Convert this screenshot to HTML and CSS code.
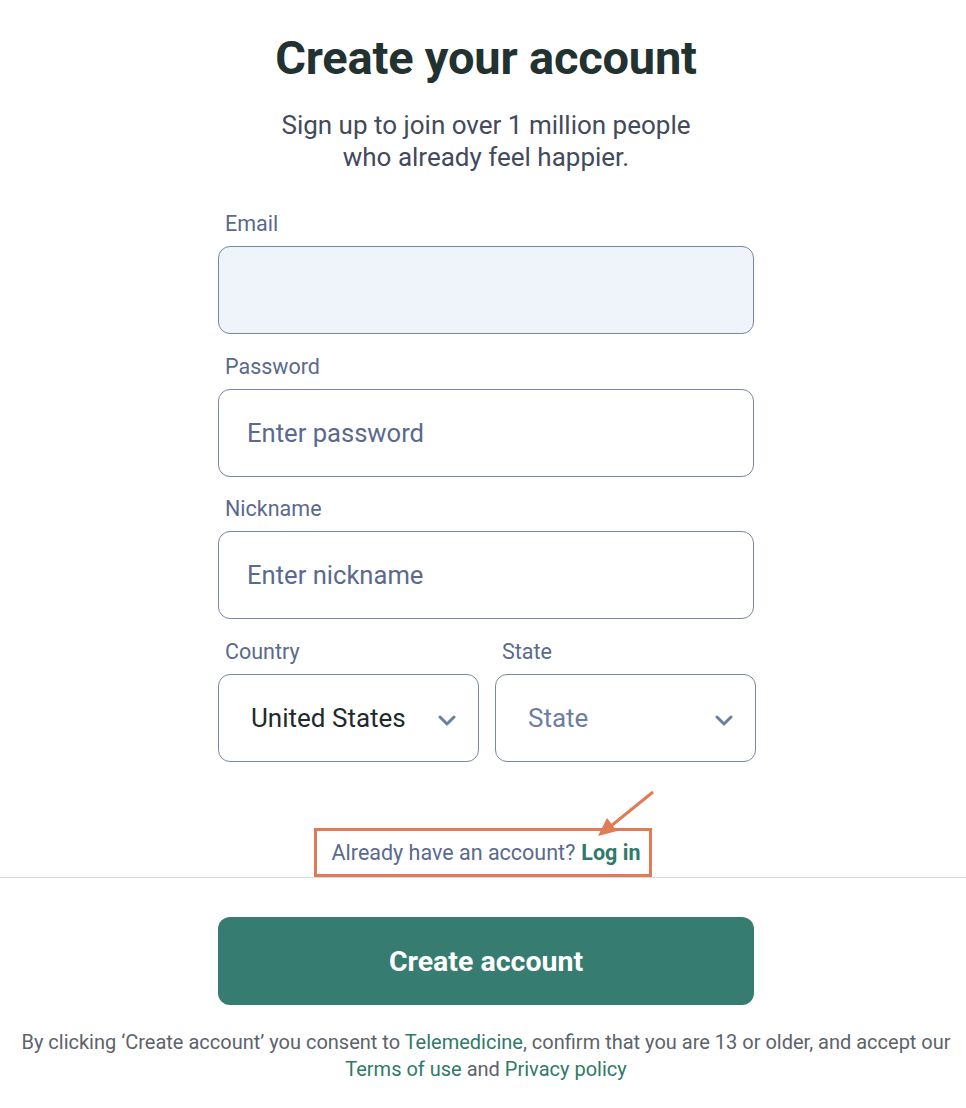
FILE: index.html
```html
<!DOCTYPE html>
<html lang="en">
<head>
<meta charset="utf-8">
<title>Create your account</title>
<link rel="stylesheet" href="styles.css">
</head>
<body>
<main class="page">
  <section class="form-area">
    <h1 class="title">Create your account</h1>
    <p class="subtitle">Sign up to join over 1 million people<br>who already feel happier.</p>

    <div class="field field-first">
      <label class="label">Email</label>
      <div class="input input-filled"></div>
    </div>
    <div class="field">
      <label class="label">Password</label>
      <div class="input"><span class="placeholder">Enter password</span></div>
    </div>
    <div class="field">
      <label class="label">Nickname</label>
      <div class="input"><span class="placeholder">Enter nickname</span></div>
    </div>
    <div class="row">
      <div class="field field-half">
        <label class="label">Country</label>
        <div class="input select"><span class="value">United States</span>
          <svg class="chev" width="18" height="11" viewBox="0 0 18 11"><path d="M2 2l7 7 7-7" fill="none" stroke="#6b7ea3" stroke-width="3" stroke-linecap="round" stroke-linejoin="round"/></svg>
        </div>
      </div>
      <div class="field field-half">
        <label class="label">State</label>
        <div class="input select"><span class="value value-muted">State</span>
          <svg class="chev" width="18" height="11" viewBox="0 0 18 11"><path d="M2 2l7 7 7-7" fill="none" stroke="#6b7ea3" stroke-width="3" stroke-linecap="round" stroke-linejoin="round"/></svg>
        </div>
      </div>
    </div>

    <div class="login-wrap">
      <p class="login">Already have an account? <a class="login-link">Log in</a></p>
      <svg class="arrow" width="70" height="60" viewBox="0 0 70 60">
        <line x1="67" y1="4" x2="25" y2="38" stroke="#e07b55" stroke-width="3"/>
        <path d="M12 48 L21 30 L31 43 Z" fill="#e07b55"/>
      </svg>
    </div>
  </section>
  <hr class="divider">
  <section class="bottom">
    <button class="cta">Create account</button>
    <p class="legal">By clicking ‘Create account’ you consent to <a class="green">Telemedicine</a>, confirm that you are 13 or older, and accept our<br><a class="green">Terms of use</a> and <a class="green">Privacy policy</a></p>
  </section>
</main>
</body>
</html>
```

FILE: styles.css
```css
* { box-sizing: border-box; }
html, body { background: #fff; }
body {
  margin: 0;
  padding-left: 6px;
  font-family: Roboto, "Liberation Sans", sans-serif;
}
.page { width: 960px; }
.form-area {
  width: 536px;
  margin: 0 auto;
  display: flex;
  flex-direction: column;
}
.title {
  margin: 30px 0 0;
  font-size: 47px;
  line-height: 56px;
  font-weight: 700;
  color: #223230;
  text-align: center;
  letter-spacing: -0.2px;
}
.subtitle {
  margin: 23px 0 0;
  font-size: 26px;
  line-height: 32px;
  color: #434a5c;
  text-align: center;
}
.field { display: flex; flex-direction: column; margin-top: 22.5px; }
.field-first { margin-top: 41px; }
.label {
  font-size: 21.5px;
  line-height: 20px;
  color: #5a6a8e;
  padding-left: 7px;
  margin-bottom: 12px;
}
.input {
  height: 88px;
  border: 1px solid #7887a8;
  border-radius: 12px;
  background: #fff;
  display: flex;
  align-items: center;
  padding: 0 28px;
}
.input-filled { background: #eff3fa; }
.placeholder { font-size: 25.6px; color: #5a6a8e; }
.row { display: flex; gap: 16px; }
.field-half { flex: 1; }
.field-half:last-child { margin-right: -2px; }
.select { justify-content: space-between; padding: 0 22px 0 32px; }
.value { font-size: 26px; color: #1f2a2b; }
.value-muted { color: #6b7ea3; }
.chev { display: block; margin-top: 6px; }
.login-wrap {
  position: relative;
  align-self: center;
  margin-top: 66.5px;
  margin-left: -6px;
}
.login {
  margin: 0;
  border: 3px solid #e07b55;
  padding: 0 9px 0 15px;
  height: 49px;
  display: flex;
  align-items: center;
  font-size: 21.5px;
  color: #5a6a8e;
}
.login-link { color: #2f7a68; font-weight: 700; margin-left: 6px; }
.arrow { position: absolute; right: -4px; top: -40px; }
.divider {
  margin: 0 0 0 -6px;
  width: 966px;
  border: 0;
  border-top: 1px solid #d8d6de;
}
.bottom { display: flex; flex-direction: column; align-items: center; }
.cta {
  margin-top: 39px;
  width: 536px;
  height: 88px;
  border: 0;
  border-radius: 12px;
  background: #367c70;
  color: #fff;
  font-family: Roboto, "Liberation Sans", sans-serif;
  font-size: 28.5px;
  font-weight: 700;
}
.legal {
  margin: 24px 0 0;
  font-size: 20px;
  line-height: 27px;
  color: #5c636b;
  text-align: center;
}
.green { color: #2f7a68; }
```
